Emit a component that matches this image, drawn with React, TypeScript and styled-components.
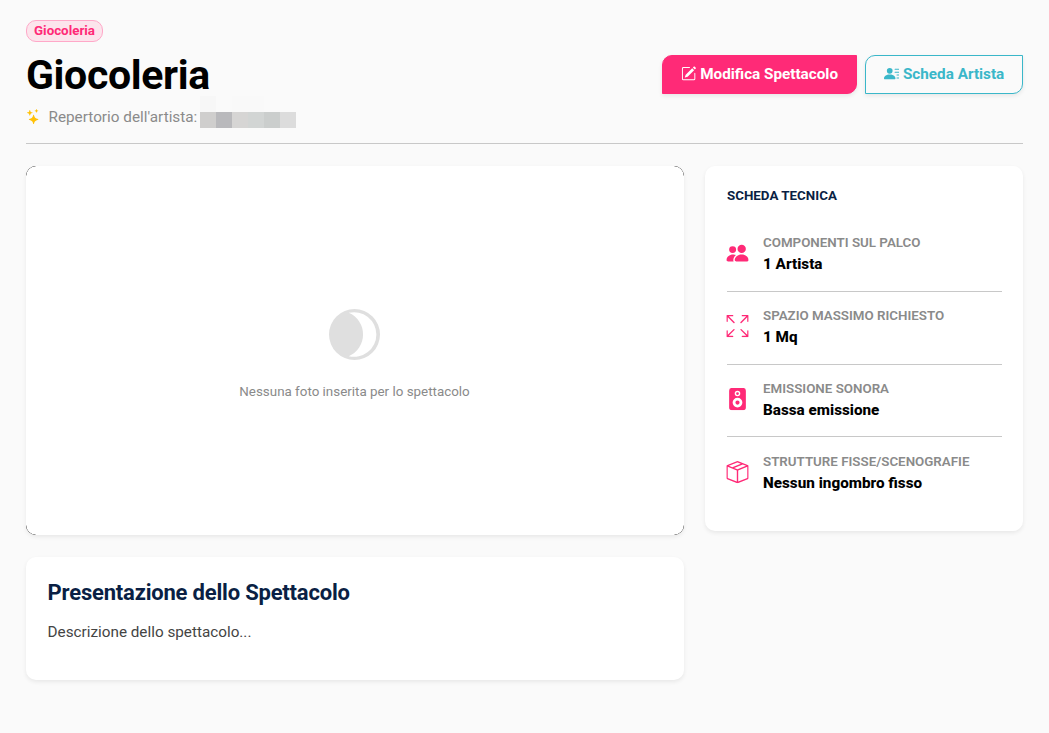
import React from "react";
import styled, { createGlobalStyle } from "styled-components";
import {
  BsArrowsFullscreen,
  BsBoxSeam,
  BsPencilSquare,
  BsPeopleFill,
  BsPersonLinesFill,
  BsSpeakerFill,
  BsStars,
} from "react-icons/bs";

const GlobalStyle = createGlobalStyle`
  * { box-sizing: border-box; }
  body {
    margin: 0;
    background: #fafafa;
    font-family: Roboto, "Liberation Sans", sans-serif;
    color: #000;
  }
  h1, h2, h3, p { margin: 0; }
`;

const Page = styled.main`
  min-height: 733px;
  padding: 20px 26px 0;
`;

const Header = styled.header`
  display: flex;
  justify-content: space-between;
  height: 124px;
  border-bottom: 1px solid #c8c8c8;
`;

const Tag = styled.span`
  display: inline-flex;
  align-items: center;
  height: 22px;
  padding: 0 7px 1px;
  border: 1px solid #ffa8c8;
  border-radius: 10px;
  background: #fce4ec;
  color: #ff2a77;
  font-size: 13.35px;
  line-height: 16px;
  font-weight: 700;
`;

const Titles = styled.div`
  display: flex;
  flex-direction: column;
  align-items: flex-start;
`;

const Title = styled.h1`
  margin-top: 9px;
  font-size: 41px;
  line-height: 48px;
  font-weight: 700;
  letter-spacing: -0.35px;
`;

const Subtitle = styled.div`
  display: flex;
  height: 32px;
  margin-top: -3px;
  color: #8a8a8a;
  font-size: 15.3px;
  line-height: 42px;

  svg {
    margin: 13px 7.3px 0 0;
    color: #ffc107;
    font-size: 15.2px;
  }
`;

const Redacted = styled.span`
  display: grid;
  grid-template: repeat(2, 16px) / repeat(6, 16px);
  margin-left: 2.6px;
`;

const Block = styled.i<{ $color: string }>`
  background: ${(p) => p.$color};
`;

const Actions = styled.div`
  display: flex;
  gap: 8px;
  padding-top: 35px;
`;

const Button = styled.button<{ $outline?: boolean }>`
  display: flex;
  align-items: center;
  justify-content: center;
  gap: 4px;
  width: ${(p) => (p.$outline ? 158 : 195)}px;
  height: 39px;
  padding: 0 0 2px;
  border: 1px solid ${(p) => (p.$outline ? "#3ab7c9" : "#ff2a77")};
  border-radius: 10px 0 10px 0;
  background: ${(p) => (p.$outline ? "#fafafa" : "#ff2a77")};
  color: ${(p) => (p.$outline ? "#3ab7c9" : "#fff")};
  box-shadow: 0 2px 4px rgba(0, 0, 0, 0.08);
  font: 700 15.28px Roboto, sans-serif;
`;

const Columns = styled.div`
  display: grid;
  grid-template-columns: 658px 318px;
  justify-content: space-between;
  align-items: start;
  margin-top: 22px;
`;

const MainColumn = styled.div`
  display: grid;
  gap: 22px;
`;

const Card = styled.section`
  border-radius: 10px;
  background: #fff;
  box-shadow: 0 2px 4px rgba(0, 0, 0, 0.075);
`;

const PhotoFrame = styled(Card)`
  height: 369px;
  overflow: hidden;
  background: #000;
`;

const EmptyPhoto = styled.div`
  display: flex;
  flex-direction: column;
  align-items: center;
  height: 100%;
  padding: 143px 1px 0 0;
  border-radius: 10px;
  background: #fff;
  color: #8a8a8a;
  font-size: 13.38px;
  line-height: 16px;

  svg { margin-bottom: 24px; }
`;

const Presentation = styled(Card)`
  height: 123px;
  padding: 22px 21.6px;

  h2 {
    color: #0a1f44;
    font-size: 22px;
    line-height: 28px;
    font-weight: 700;
    letter-spacing: -0.2px;
  }
  p {
    margin-top: 15px;
    color: #444;
    font-size: 15.28px;
    line-height: 20px;
  }
`;

const Specs = styled(Card)`
  height: 365px;
  padding: 21px 21px 0 22px;
`;

const SpecsTitle = styled.h3`
  margin-bottom: 15px;
  color: #0a1f44;
  font-size: 13.35px;
  line-height: 17px;
  font-weight: 700;
`;

const Spec = styled.div`
  display: flex;
  gap: 14px;
  height: 73px;
  padding-top: 15px;
  border-bottom: 1px solid #c8c8c8;

  &:nth-last-child(2) { height: 72px; }
  &:last-child {
    padding-top: 16px;
    border-bottom: 0;
  }
  svg {
    flex: none;
    margin: 8px 0 0 -1px;
    color: #ff2a77;
    font-size: 23px;
    transform: translateY(-0.4px) scale(0.97);
  }
`;

const SpecLabel = styled.div`
  color: #8a8a8a;
  font-size: 13.35px;
  line-height: 18px;
  font-weight: 600;
`;

const SpecValue = styled.div`
  margin-top: 1px;
  font-size: 15.28px;
  line-height: 22px;
  font-weight: 800;
`;

const hiddenName = [
  "#f7f7f7", "#fafafa", "#f9f9f9", "#f9f9f9", "#fafafa", "#fafafa",
  "#cfcecd", "#b9b9bc", "#d6d5d4", "#d2d5d4", "#cbcecd", "#dcdcdc",
];

const specs = [
  { Icon: BsPeopleFill, label: "COMPONENTI SUL PALCO", value: "1 Artista" },
  { Icon: BsArrowsFullscreen, label: "SPAZIO MASSIMO RICHIESTO", value: "1 Mq" },
  { Icon: BsSpeakerFill, label: "EMISSIONE SONORA", value: "Bassa emissione" },
  { Icon: BsBoxSeam, label: "STRUTTURE FISSE/SCENOGRAFIE", value: "Nessun ingombro fisso" },
];

const PhaseIcon = () => (
  <svg width="51" height="51" viewBox="0 0 16 16" fill="#dfdfdf">
    <path
      fillRule="evenodd"
      d="M8 0a8 8 0 1 1 0 16A8 8 0 0 1 8 0M6.2 1.2A7.4 7.4 0 0 1 6.2 14.8A7 7 0 1 0 6.2 1.2"
    />
  </svg>
);

export default function App() {
  return (
    <>
      <GlobalStyle />
      <Page>
        <Header>
          <Titles>
            <Tag>Giocoleria</Tag>
            <Title>Giocoleria</Title>
            <Subtitle>
              <BsStars />
              Repertorio dell'artista:
              <Redacted>
                {hiddenName.map((color, i) => (
                  <Block key={i} $color={color} />
                ))}
              </Redacted>
            </Subtitle>
          </Titles>
          <Actions>
            <Button>
              <BsPencilSquare />
              Modifica Spettacolo
            </Button>
            <Button $outline>
              <BsPersonLinesFill />
              Scheda Artista
            </Button>
          </Actions>
        </Header>
        <Columns>
          <MainColumn>
            <PhotoFrame>
              <EmptyPhoto>
                <PhaseIcon />
                Nessuna foto inserita per lo spettacolo
              </EmptyPhoto>
            </PhotoFrame>
            <Presentation>
              <h2>Presentazione dello Spettacolo</h2>
              <p>Descrizione dello spettacolo...</p>
            </Presentation>
          </MainColumn>
          <Specs>
            <SpecsTitle>SCHEDA TECNICA</SpecsTitle>
            {specs.map(({ Icon, label, value }) => (
              <Spec key={label}>
                <Icon />
                <div>
                  <SpecLabel>{label}</SpecLabel>
                  <SpecValue>{value}</SpecValue>
                </div>
              </Spec>
            ))}
          </Specs>
        </Columns>
      </Page>
    </>
  );
}
